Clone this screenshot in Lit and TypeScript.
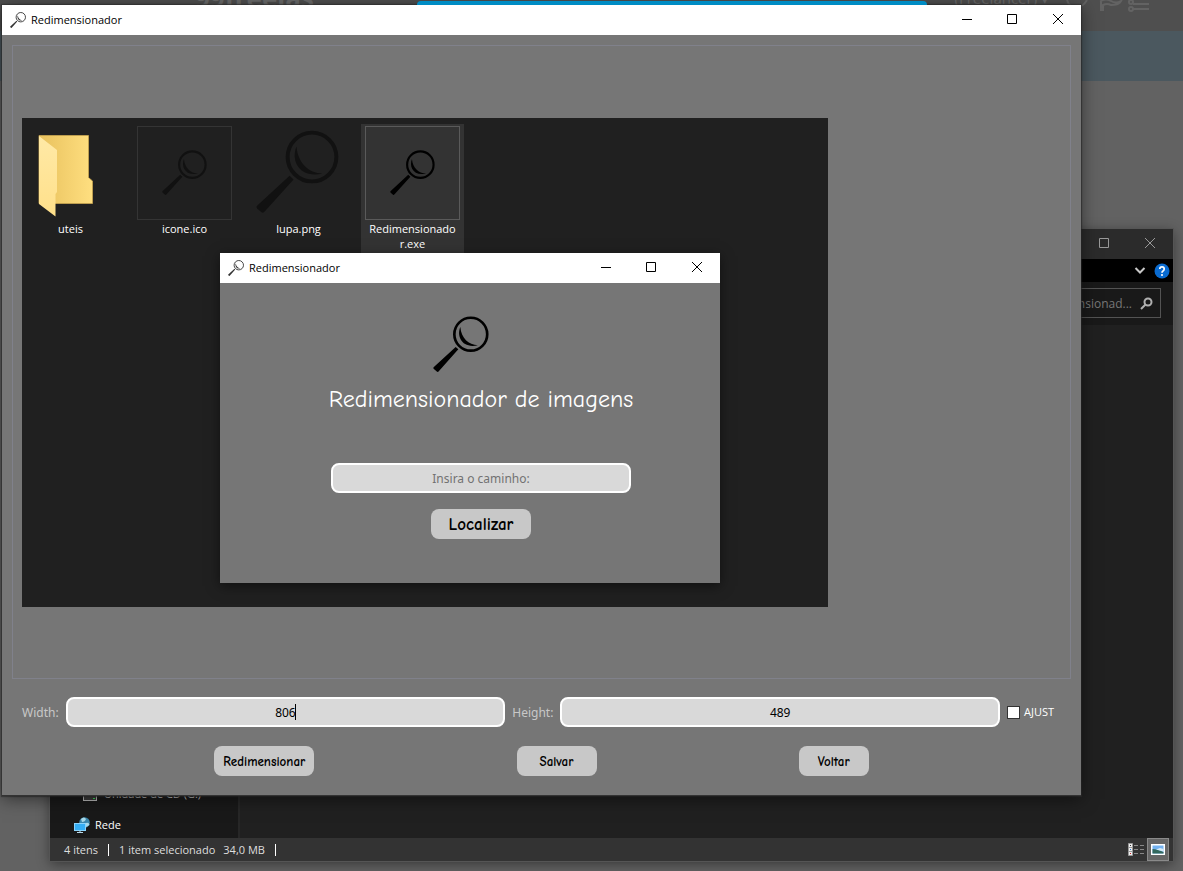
import { LitElement, html, css, svg, nothing } from "lit";
import { customElement, property } from "lit/decorators.js";

const lens = (fine = false) => svg`
  <circle cx="215" cy="140" r="74" fill="none" stroke="currentColor" stroke-width=${fine ? 14 : 12}></circle>
  <path d="M168 108 C150 150 176 206 247 190 C205 189 172 158 168 108Z" fill="currentColor"></path>
  <path d="M147 197 L159 208 L72 305 Q67 312 62 308 L49 297 Q44 292 49 287Z" fill="currentColor"></path>`;

@customElement("lupa-icon")
class LupaIcon extends LitElement {
  @property({ type: Boolean }) fine = false;
  static styles = css`
    :host { display: block; flex: none; }
    svg { display: block; width: 100%; height: 100%; }
  `;
  render() {
    return html`<svg viewBox="45 58 252 252" aria-hidden="true">${lens(this.fine)}</svg>`;
  }
}

@customElement("window-bar")
class WindowBar extends LitElement {
  @property() label = "";
  @property({ type: Boolean }) dark = false;
  static styles = css`
    :host { display: block; flex: none; }
    .bar { display: flex; align-items: center; height: 30px; background: #fff; color: #000; }
    .bar.dark { background: #2b2b2b; color: #999; }
    .name { flex: 1; display: flex; align-items: center; gap: 5px; padding-left: 8px; font: 11px/16px "Open Sans", sans-serif; }
    lupa-icon { width: 16px; height: 16px; color: #333; }
    button { box-sizing: border-box; width: 46px; height: 30px; border: 0; padding: 0 0 2px; background: none; color: inherit; display: grid; place-items: center; }
    button svg { display: block; width: 10px; height: 10px; fill: none; stroke: currentColor; overflow: visible; }
  `;
  render() {
    return html`<div class="bar ${this.dark ? "dark" : ""}">
      <div class="name">${this.label ? html`<lupa-icon fine></lupa-icon><span>${this.label}</span>` : nothing}</div>
      <button aria-label="Minimizar"><svg viewBox="0 0 10 10"><path d="M1 5.500H11"></path></svg></button>
      <button aria-label="Maximizar"><svg viewBox="0 0 10 10"><path d="M.5 .5H9.5V9.5H.5Z"></path></svg></button>
      <button aria-label="Fechar"><svg viewBox="0 0 10 10"><path d="M0 0L10 10M10 0L0 10"></path></svg></button>
    </div>`;
  }
}

@customElement("file-explorer")
class FileExplorer extends LitElement {
  static styles = css`
    :host { display: flex; flex-direction: column; background: #202020; color: #dedede; font: 11px/16px "Open Sans", sans-serif; }
    .ribbon { height: 23px; background: #000; display: flex; justify-content: flex-end; align-items: center; gap: 8px; padding-right: 3px; }
    svg { display: block; flex: none; }
    .address { height: 43px; background: #191919; display: flex; justify-content: flex-end; align-items: flex-start; box-sizing: border-box; padding: 6px 12px; }
    .search { box-sizing: border-box; width: 230px; height: 30px; border: 1px solid #535353; display: flex; align-items: center; gap: 8px; padding-right: 7px; }
    .search input { flex: 1; min-width: 0; border: 0; padding: 0; background: none; color: #777; font: 12px "Open Sans", sans-serif; text-align: right; outline: none; }
    .main { flex: 1; display: flex; min-height: 0; }
    .side { box-sizing: border-box; width: 190px; background: #191919; border-right: 2px solid #272727; display: flex; flex-direction: column; justify-content: flex-end; }
    .item { height: 31px; display: flex; align-items: center; gap: 5px; color: #fff; padding-left: 24px; }
    .drive { padding-left: 32px; gap: 6px; color: #ccc; }
    .side .item:last-child { margin-bottom: -2px; }
    .status { height: 23px; background: #333; display: flex; align-items: center; padding-left: 14px; }
    .status span { padding-right: 10px; }
    .status .part { border-left: 1px solid #fff; height: 12px; display: flex; align-items: center; padding-left: 10px; }
    .status .part span { padding-right: 8px; }
    .status .part span + span { padding-right: 10px; }
    .views { margin-left: auto; display: flex; align-items: center; padding-right: 4px; }
    .views button { width: 22px; height: 23px; padding: 0; border: 0; background: none; display: grid; place-items: center; }
    .views .on { background: #666; border: 1px solid #8a8a8a; }
  `;
  render() {
    return html`
      <window-bar dark></window-bar>
      <div class="ribbon">
        <svg width="12" height="8" viewBox="0 0 12 8" fill="none" stroke="#c8c8c8" stroke-width="2"><path d="M1.500 1L6 5.500L10.500 1"></path></svg>
        <svg width="16" height="16" viewBox="0 0 16 16"><circle cx="8" cy="8" r="7.500" fill="#0a6bd0"></circle><path d="M5.800 6Q5.800 3.900 8 3.900T10.200 6Q10.200 7.200 9 7.900Q8 8.500 8 9.700" fill="none" stroke="#fff" stroke-width="1.700"></path><circle cx="8" cy="12" r="1.100" fill="#fff"></circle></svg>
      </div>
      <div class="address">
        <div class="search">
          <input aria-label="Pesquisar" value="Pesquisar Redimensionad..." />
          <svg width="13" height="13" viewBox="0 0 13 13" fill="none" stroke="#b0b0b0" stroke-width="2"><circle cx="8" cy="5" r="3.500"></circle><path d="M5.500 7.500L1 12"></path></svg>
        </div>
      </div>
      <div class="main">
        <div class="side">
          <div class="item drive">
            <svg width="16" height="16" viewBox="0 0 16 16"><path d="M3 3H13L15 9H1Z" fill="#777"></path><rect x="1.500" y="9.500" width="13" height="5" fill="#3c3c3c" stroke="#bbb"></rect><rect x="11" y="12" width="2" height="1" fill="#3fdc5a"></rect></svg>
            <span>Unidade de CD (G:)</span>
          </div>
          <div class="item">
            <svg width="16" height="16" viewBox="0 0 16 16"><circle cx="10.500" cy="5.500" r="5.300" fill="#3b87ad"></circle><path d="M7 2Q10 -1 12 2Q11 5 8 5ZM12 6Q15 5 15.500 8L12 10Z" fill="#a8d8e8"></path><rect x=".5" y="6.500" width="11" height="7" fill="#35aef5" stroke="#8bd3fb"></rect><path d="M3 15.500H9M6 14V15" stroke="#b8d9ea"></path></svg>
            <span>Rede</span>
          </div>
        </div>
      </div>
      <div class="status">
        <span>4 itens</span>
        <div class="part"><span>1 item selecionado</span><span>34,0 MB</span></div>
        <div class="part"></div>
        <div class="views">
          <button aria-label="Detalhes"><svg width="16" height="13" viewBox="0 0 16 13"><path d="M.5 .5H4.500V12.500H.5ZM.5 4.500H4.500M.5 8.500H4.500" fill="#eee" stroke="#999"></path><path d="M6 2.500H10M12 2.500H16M6 6.500H10M12 6.500H16M6 10.500H10M12 10.500H16" stroke="#888"></path><path d="M2 2.500H3" stroke="#333"></path><path d="M2 6.500H3" stroke="#27c"></path><path d="M2 10.500H3" stroke="#c22"></path></svg></button>
          <button class="on" aria-label="Ícones grandes"><svg width="14" height="11" viewBox="0 0 14 11"><rect width="14" height="11" fill="#fff"></rect><rect x="1.500" y="1.500" width="11" height="8" fill="#74b2f0"></rect><path d="M1.500 5Q6 5 12.500 8V9.500H1.500Z" fill="#32685d"></path><path d="M5 5.500L9 4L12.500 5V7.500Z" fill="#d8ecf8"></path></svg></button>
        </div>
      </div>`;
  }
}

@customElement("search-dialog")
class SearchDialog extends LitElement {
  static styles = css`
    :host { display: flex; flex-direction: column; background: #767676; box-shadow: 0 3px 12px rgba(0, 0, 0, 0.5); }
    .body { flex: 1; display: flex; flex-direction: column; align-items: center; padding: 33px 0 0 22px; }
    lupa-icon { width: 56px; height: 56px; color: #000; margin-right: 40px; }
    h1 { margin: 8px 0 45px; color: #fff; font: 24px/38px "Comic Neue", "Lato", sans-serif; }
    input { box-sizing: border-box; width: 300px; height: 30px; border: 2px solid #fff; border-radius: 8px; background: #d9d9d9; text-align: center; padding: 2px 0 0; font: 12px "Noto Sans", sans-serif; outline: none; }
    input::placeholder { color: #727272; opacity: 1; }
    button { width: 100px; height: 30px; margin-top: 16px; border: 0; padding: 2px 0 0; border-radius: 8px; background: #c8c8c8; color: #000; font: bold 17px "Comic Neue", "Lato", sans-serif; }
  `;
  render() {
    return html`
      <window-bar label="Redimensionador"></window-bar>
      <div class="body">
        <lupa-icon></lupa-icon>
        <h1>Redimensionador de imagens</h1>
        <input aria-label="Caminho" placeholder="Insira o caminho:" />
        <button>Localizar</button>
      </div>`;
  }
}

@customElement("resize-window")
class ResizeWindow extends LitElement {
  static styles = css`
    :host { display: flex; flex-direction: column; background: #767676; border-bottom: 1px solid #333; box-shadow: 0 3px 16px rgba(0, 0, 0, 0.5), 0 0 1px 1px rgba(50, 50, 50, 0.6); }
    .frame { flex: 1; margin: 10px 10px 0; border: 1px solid #80818b; display: flex; align-items: center; padding-left: 9px; }
    .preview { position: relative; width: 806px; height: 489px; background: #202020; overflow: hidden; }
    .files { display: grid; grid-template-columns: repeat(4, 103px); gap: 11px; margin: 6px 0 0 -3px; padding: 0; list-style: none; color: #fff; font: 11px/15px "Open Sans", sans-serif; text-align: center; }
    .file { display: flex; flex-direction: column; align-items: center; gap: 1px; height: 130px; padding-top: 2px; }
    .file.on { background: #333; }
    .thumb { box-sizing: border-box; width: 95px; height: 94px; display: grid; place-items: center; color: #111; border: 1px solid transparent; }
    .thumb.boxed { border-color: #343434; }
    .file.on .thumb { border-color: #5a5a5a; color: #000; }
    .small { width: 45px; height: 45px; }
    .large { width: 83px; height: 83px; margin: 0 3px 3px 0; }
    .folder { width: 93px; height: 92px; }
    search-dialog { position: absolute; left: 198px; top: 135px; width: 500px; height: 330px; }
    .sizes { display: flex; align-items: center; gap: 7px; margin: 18px 10px 0; padding-left: 10px; color: #c8c8c8; font: 12px/16px "Noto Sans", sans-serif; }
    .sizes label { flex: none; padding-top: 1px; }
    .box { position: relative; flex: 1; display: flex; }
    .box input { box-sizing: border-box; width: 100%; min-width: 0; height: 30px; border: 2px solid #fff; border-radius: 8px; background: #d9d9d9; color: #000; text-align: center; font: inherit; outline: none; }
    .caret { position: absolute; left: calc(50% + 10px); top: 7px; width: 1px; height: 16px; background: #000; }
    .sizes .fit { display: flex; align-items: center; gap: 4px; width: 64px; padding: 0; color: #fff; font: 11px/16px "Open Sans", sans-serif; }
    .fit input { appearance: none; box-sizing: border-box; width: 13px; height: 13px; margin: 0; border: 1px solid #333; background: #fff; }
    .actions { display: flex; justify-content: space-evenly; margin: 19px 10px; }
    .actions button { width: 80px; height: 30px; border: 0; padding: 0; border-radius: 8px; background: #c8c8c8; color: #000; font: bold 13px "Comic Neue", "Lato", sans-serif; }
    .actions .wide { width: 100px; }
    .actions .narrow { width: 70px; }
  `;
  render() {
    return html`
      <window-bar label="Redimensionador"></window-bar>
      <div class="frame">
        <div class="preview">
          <ul class="files">
            <li class="file">
              <div class="thumb">
                <svg class="folder" viewBox="24 127 93 92">
                  <defs>
                    <linearGradient id="back"><stop offset="0" stop-color="#e8c15d"></stop><stop offset="1" stop-color="#ffdf80"></stop></linearGradient>
                    <linearGradient id="front" x2="0" y2="1"><stop offset="0" stop-color="#ffe9a6"></stop><stop offset="1" stop-color="#ffe08a"></stop></linearGradient>
                  </defs>
                  <path d="M39 135.500H88.500V177.500L92.500 181V203.500H39Z" fill="url(#back)" stroke="#c9a650" stroke-width=".8"></path>
                  <path d="M39 136L57 150V192L55.500 194V216.500L39 204Z" fill="url(#front)"></path>
                </svg>
              </div>
              <span>uteis</span>
            </li>
            <li class="file"><div class="thumb boxed"><lupa-icon class="small"></lupa-icon></div><span>icone.ico</span></li>
            <li class="file"><div class="thumb"><lupa-icon class="large"></lupa-icon></div><span>lupa.png</span></li>
            <li class="file on"><div class="thumb"><lupa-icon class="small"></lupa-icon></div><span>Redimensionado<br />r.exe</span></li>
          </ul>
          <search-dialog></search-dialog>
        </div>
      </div>
      <div class="sizes">
        <label for="w">Width:</label>
        <div class="box"><input id="w" .value=${"806"} /><span class="caret"></span></div>
        <label for="h">Height:</label>
        <div class="box"><input id="h" .value=${"489"} /></div>
        <label class="fit"><input type="checkbox" />AJUST</label>
      </div>
      <div class="actions">
        <button class="wide">Redimensionar</button>
        <button>Salvar</button>
        <button class="narrow">Voltar</button>
      </div>`;
  }
}

@customElement("app-root")
class AppRoot extends LitElement {
  static styles = css`
    :host { display: block; }
    .desktop { position: relative; height: 100vh; min-height: 780px; overflow: hidden; background: #626262; display: flex; flex-direction: column; font: 15px/20px "Open Sans", sans-serif; }
    .site { flex: none; height: 31px; background: #4f4f4f; color: #6b6b6b; display: flex; gap: 16px; box-sizing: border-box; padding: 0 34px 0 195px; }
    .site span { margin-top: -12px; }
    .site .brand { flex: 1; font: bold 26px/20px "Open Sans", sans-serif; }
    .site svg { display: block; width: 84px; height: 14px; fill: none; stroke: #636363; stroke-width: 2; }
    .band { flex: none; height: 50px; background: #4b585f; }
    .foot { margin-top: auto; height: 4px; padding-left: 518px; font-size: 12px; color: #4a4a4a; }
    .progress { position: absolute; left: 417px; right: 256px; top: 1px; height: 4px; border-radius: 4px 4px 0 0; background: #008cc4; }
    file-explorer { position: absolute; left: 50px; right: 10px; top: 229px; bottom: 10px; box-shadow: 0 0 0 1px #555, 0 3px 12px rgba(0, 0, 0, 0.45); }
    resize-window { position: absolute; left: 2px; right: 102px; top: 5px; bottom: 75px; }
  `;
  render() {
    return html`<div class="desktop">
      <div class="site">
        <span class="brand">99freelas</span>
        <span>(Freelancer) ▾</span>
        <svg viewBox="0 0 84 14" aria-hidden="true"><path d="M2 0Q4 7 11 7T22 0M36 10V1Q41 -2 46 1T56 1Q54 5 46 5Q42 3 38 5V10ZM68 4H84M68 9H84"></path><circle cx="66" cy="2" r="2"></circle><circle cx="66" cy="9" r="2"></circle></svg>
      </div>
      <div class="band"></div>
      <div class="foot">© 2014-2022 99Freelas. Todos os direitos reservados.</div>
      <file-explorer></file-explorer>
      <resize-window></resize-window>
      <div class="progress"></div>
    </div>`;
  }
}
